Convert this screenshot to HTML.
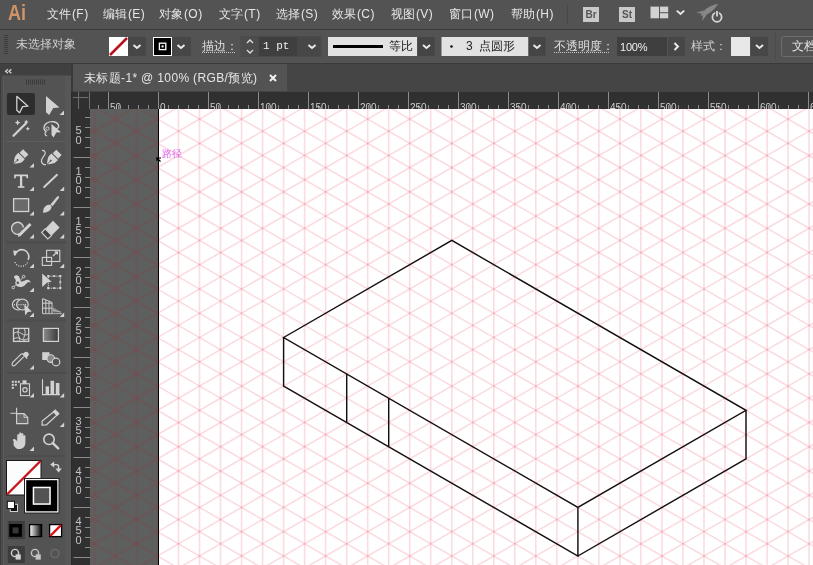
<!DOCTYPE html>
<html><head><meta charset="utf-8">
<style>
*{margin:0;padding:0;box-sizing:border-box}
html,body{width:813px;height:565px;overflow:hidden;background:#535353;font-family:"Liberation Sans",sans-serif;}
body{will-change:transform}
.a{position:absolute}
.mi{position:absolute;top:5.5px;color:#e6e6e6;font-size:12px;line-height:16px;white-space:nowrap;letter-spacing:0.45px}
.ct{position:absolute;color:#d0d0d0;font-size:12px;line-height:16px;white-space:nowrap}
.tt{letter-spacing:0.35px}
.rl{position:absolute;color:#cfcfcf;font-size:10px;line-height:10px;}
.rv{position:absolute;color:#c4c4c4;font-size:11px;line-height:11px;}
.dd{position:absolute;top:37px;height:19px;background:#474747}
.chev{position:absolute;}
</style></head><body>
<!-- menu bar -->
<div class="a" style="left:0;top:0;width:813px;height:29px;background:#535353"></div>
<div class="a" style="left:8px;top:1px;font-size:22px;line-height:24px;font-weight:bold;color:#cf9367;transform:scaleX(0.82);transform-origin:0 0">Ai</div>
<div class="mi" style="left:47px">文件(F)</div>
<div class="mi" style="left:103px">编辑(E)</div>
<div class="mi" style="left:159px">对象(O)</div>
<div class="mi" style="left:219px">文字(T)</div>
<div class="mi" style="left:276px">选择(S)</div>
<div class="mi" style="left:332px">效果(C)</div>
<div class="mi" style="left:391px">视图(V)</div>
<div class="mi" style="left:449px">窗口(W)</div>
<div class="mi" style="left:511px">帮助(H)</div>
<div class="a" style="left:567px;top:5px;width:1px;height:19px;background:#474747"></div>
<div class="a" style="left:583px;top:7px;width:16px;height:15px;background:#c9c9c9;color:#555;font-size:10px;line-height:15px;font-weight:bold;text-align:center">Br</div>
<div class="a" style="left:619px;top:7px;width:16px;height:15px;background:#c9c9c9;color:#555;font-size:10px;line-height:15px;font-weight:bold;text-align:center">St</div>
<svg class="a" style="left:640px;top:0" width="90" height="29" viewBox="640 0 90 29">
<rect x="650.5" y="6.6" width="8.5" height="11.7" fill="#d2d2d2"/><rect x="660" y="6.6" width="8.2" height="5.6" fill="#d2d2d2"/><rect x="660" y="13.2" width="8.2" height="5.1" fill="#d2d2d2"/>
<path d="M676.8 10.6L680.5 14L684.2 10.6" stroke="#e8e8e8" stroke-width="1.9" fill="none"/>
<g transform="translate(709 10) rotate(-35)" fill="#888"><path d="M-10 0C-6 -3.5 4 -3.5 11 0C4 3.5 -6 3.5 -10 0Z"/><path d="M-8 -1L-12 -5L-4 -2.5ZM-8 1L-12 5L-4 2.5Z"/></g>
<circle cx="717" cy="17.2" r="4.6" stroke="#535353" stroke-width="4" fill="none"/>
<circle cx="717" cy="17.2" r="4.6" stroke="#d6d6d6" stroke-width="1.8" fill="none"/>
<path d="M717 10.5v6.5" stroke="#535353" stroke-width="3.6"/><path d="M717 11v5.6" stroke="#d6d6d6" stroke-width="1.8"/>
</svg>
<div class="a" style="left:0;top:29px;width:813px;height:1px;background:#3a3a3a"></div>
<!-- control bar -->
<div class="a" style="left:0;top:30px;width:813px;height:33px;background:#535353"></div>
<svg class="a" style="left:0;top:30px" width="813" height="33" viewBox="0 30 813 33">
<g fill="#3c3c3c"><rect x="4" y="35" width="4" height="1"/><rect x="4" y="37" width="4" height="1"/><rect x="4" y="39" width="4" height="1"/><rect x="4" y="41" width="4" height="1"/><rect x="4" y="43" width="4" height="1"/><rect x="4" y="45" width="4" height="1"/><rect x="4" y="47" width="4" height="1"/><rect x="4" y="49" width="4" height="1"/><rect x="4" y="51" width="4" height="1"/><rect x="4" y="53" width="4" height="1"/></g>
<rect x="109" y="37" width="19" height="19" fill="#fff"/>
<path d="M110 55L127 38" stroke="#b8101c" stroke-width="2.5"/>
<rect x="128" y="37" width="18" height="19" fill="#474747"/>
<path d="M133.5 45L137 48L140.5 45" stroke="#ececec" stroke-width="1.9" fill="none"/>
<rect x="153" y="37" width="19" height="19" fill="#fff"/>
<rect x="154" y="38" width="17" height="17" fill="#000"/>
<rect x="159.4" y="43.2" width="6.4" height="6.4" fill="none" stroke="#fff" stroke-width="1.3"/>
<rect x="161.6" y="45.4" width="2" height="2" fill="#fff"/>
<rect x="172" y="37" width="19" height="19" fill="#474747"/>
<path d="M177.5 45L181 48L184.5 45" stroke="#ececec" stroke-width="1.9" fill="none"/>
<path d="M202 52.5H236" stroke="#c8c8c8" stroke-width="1" stroke-dasharray="1 1"/>
<rect x="241" y="36.5" width="80" height="20" fill="none" stroke="#4a4a4a" stroke-width="1"/>
<rect x="241.5" y="37" width="17.5" height="19" fill="#4c4c4c"/>
<path d="M247 43L250 40L253 43M247 50L250 53L253 50" stroke="#e0e0e0" stroke-width="1.3" fill="none"/>
<rect x="259" y="37" width="38" height="19" fill="#3f3f3f"/>
<rect x="297" y="37" width="7" height="19" fill="#474747"/>
<rect x="304" y="37" width="16.5" height="19" fill="#474747"/>
<path d="M308.5 45L312 48L315.5 45" stroke="#ececec" stroke-width="1.9" fill="none"/>
<rect x="328" y="37" width="89" height="19" fill="#e2e2e2"/>
<rect x="333" y="45" width="50" height="3" fill="#000"/>
<rect x="418" y="37" width="16.5" height="19" fill="#454545"/>
<path d="M423 45L426.5 48L430 45" stroke="#ececec" stroke-width="1.9" fill="none"/>
<rect x="441.5" y="37" width="87" height="19" fill="#e2e2e2"/>
<circle cx="451.5" cy="46.5" r="1.3" fill="#111"/>
<rect x="528.5" y="37" width="17" height="19" fill="#454545"/>
<path d="M533.5 45L537 48L540.5 45" stroke="#ececec" stroke-width="1.9" fill="none"/>
<path d="M554 52.5H610" stroke="#c8c8c8" stroke-width="1" stroke-dasharray="1 1"/>
<rect x="617" y="37" width="50" height="19" fill="#3f3f3f"/>
<rect x="668" y="37" width="17" height="19" fill="#474747"/>
<path d="M674.5 43L678 46.5L674.5 50" stroke="#ececec" stroke-width="1.9" fill="none"/>
<rect x="731" y="37" width="19" height="19" fill="#e8e8e8"/>
<rect x="751" y="37" width="17" height="19" fill="#474747"/>
<path d="M756 45L759.5 48L763 45" stroke="#ececec" stroke-width="1.9" fill="none"/>
<rect x="775" y="33" width="1" height="27" fill="#4a4a4a"/>
<rect x="781.5" y="36.5" width="40" height="20" rx="2" fill="#535353" stroke="#6e6e6e" stroke-width="1"/>
</svg>
<div class="ct" style="left:16px;top:36px;color:#cfcfcf">未选择对象</div>
<div class="ct" style="left:202px;top:38px;color:#e0e0e0">描边：</div>
<div class="ct" style="left:263px;top:38px;color:#f0f0f0;font-family:'Liberation Mono',monospace;font-size:11px">1 pt</div>
<div class="ct" style="left:389px;top:38px;color:#222;">等比</div>
<div class="ct" style="left:466px;top:38px;color:#222;">3</div><div class="ct" style="left:479px;top:38px;color:#222;">点圆形</div>
<div class="ct" style="left:554px;top:38px;color:#e0e0e0">不透明度：</div>
<div class="ct" style="left:620px;top:38.5px;color:#f0f0f0;font-size:11px;letter-spacing:-0.2px">100%</div>
<div class="ct" style="left:691px;top:38px;color:#cfcfcf">样式：</div>
<div class="ct" style="left:792px;top:38px;color:#e6e6e6">文档</div>
<div class="a" style="left:0;top:63px;width:813px;height:1px;background:#3a3a3a"></div>
<!-- tab bar -->
<div class="a" style="left:71px;top:64px;width:742px;height:28px;background:#454545"></div>
<div class="a" style="left:73px;top:64px;width:214px;height:27px;background:#535353"></div>
<div class="ct tt" style="left:84px;top:70px;color:#e6e6e6">未标题-1* @ 100% (RGB/预览)</div>
<svg class="a" style="left:268px;top:73px" width="10" height="10" viewBox="0 0 10 10"><path d="M2 2L8 8M8 2L2 8" stroke="#f0f0f0" stroke-width="2"/></svg>
<!-- tool panel -->
<div class="a" style="left:0;top:64px;width:71px;height:501px;background:#535353"></div>
<div class="a" style="left:71px;top:64px;width:2px;height:28px;background:#3a3a3a"></div><div class="a" style="left:71px;top:92px;width:1px;height:473px;background:#2b2b2b"></div>

<svg class="a" style="left:0;top:64px" width="71" height="501" viewBox="0 64 71 501">
<rect x="0" y="75.5" width="1" height="490" fill="#3c3c3c"/><rect x="1" y="75.5" width="2" height="490" fill="#4c4c4c"/><rect x="65" y="75.5" width="6" height="490" fill="#575757"/>
<rect x="0" y="64" width="71" height="11.5" fill="#404040"/>
<path d="M8 69.2L5.6 71.2L8 73.2M11.4 69.2L9 71.2L11.4 73.2" stroke="#cfcfcf" stroke-width="1.3" fill="none"/>
<rect x="3" y="75.5" width="1" height="490" fill="#5a5a5a"/>

<g fill="#3a3a3a"><rect x="26" y="79.5" width="1" height="5"/><rect x="28" y="79.5" width="1" height="5"/><rect x="30" y="79.5" width="1" height="5"/><rect x="32" y="79.5" width="1" height="5"/><rect x="34" y="79.5" width="1" height="5"/><rect x="36" y="79.5" width="1" height="5"/><rect x="38" y="79.5" width="1" height="5"/><rect x="40" y="79.5" width="1" height="5"/><rect x="42" y="79.5" width="1" height="5"/><rect x="44" y="79.5" width="1" height="5"/></g>
<rect x="7" y="93" width="28" height="22" rx="2" fill="#2d2d2d"/>
<!-- selection -->
<path d="M16.8 96.3L28 106.2L22.6 106.6L19.6 112.8L16.8 110.2Z" stroke="#d2d2d2" stroke-width="1.3" fill="none" stroke-linejoin="round"/>
<!-- direct selection -->
<path d="M46 96L59.5 107.6L53.3 108L49.2 115L46 112.2Z" fill="#d2d2d2"/>
<path d="M64 115L64 110.5L59.5 115Z" fill="#d2d2d2"/>
<!-- magic wand -->
<path d="M13.5 135.8L25.8 123.5" stroke="#d2d2d2" stroke-width="2.2" stroke-linecap="round"/>
<path d="M17.6 119.8l.9 2 2 .9-2 .9-.9 2-.9-2-2-.9 2-.9zM26.3 119.5l.8 1.7 1.7.8-1.7.8-.8 1.7-.8-1.7-1.7-.8 1.7-.8zM27.8 126.6l.7 1.4 1.4.7-1.4.7-.7 1.4-.7-1.4-1.4-.7 1.4-.7z" fill="#d2d2d2"/>
<!-- lasso -->
<path d="M46.5 131.5c-3.5-1-3.5-6 .5-8.5c4-2.5 10-1.5 11.5 2c.8 2-1 3.5-2.5 4" stroke="#d2d2d2" stroke-width="1.3" fill="none"/>
<path d="M46.5 131.5c-2.5 1 -1.5 4 .5 4.5" stroke="#d2d2d2" stroke-width="1.2" fill="none"/>
<circle cx="47.5" cy="128.5" r="1.6" stroke="#d2d2d2" stroke-width="1" fill="none"/>
<path d="M51.5 124L61 132.2L56.3 132.6L53.6 137.5L51.5 135Z" fill="#d2d2d2"/>
<rect x="6" y="141" width="60" height="1" fill="#5d5d5d"/>
<!-- pen -->
<g transform="translate(13.6 164) rotate(45)">
<path d="M0 0C-1.2 -2.2 -4.6 -5.2 -4.6 -8.2V-11.2H4.6V-8.2C4.6 -5.2 1.2 -2.2 0 0Z" fill="#d2d2d2"/>
<rect x="-3.8" y="-17.2" width="7.6" height="5" fill="#d2d2d2"/>
<path d="M0 0.5V-5" stroke="#535353" stroke-width="0.9"/><circle cx="0" cy="-5.6" r="1" fill="#535353"/>
</g>
<path d="M34 167.5L34 163.0L29.5 167.5Z" fill="#d2d2d2"/>
<!-- curvature pen -->
<g transform="translate(46.8 164.6) rotate(45)">
<path d="M0 0C-1.2 -2.2 -4.6 -5.2 -4.6 -8.2V-11.2H4.6V-8.2C4.6 -5.2 1.2 -2.2 0 0Z" fill="#d2d2d2"/>
<rect x="-3.8" y="-17.2" width="7.6" height="5" fill="#d2d2d2"/>
<path d="M0 0.5V-5" stroke="#535353" stroke-width="0.9"/><circle cx="0" cy="-5.6" r="1" fill="#535353"/>
</g>
<path d="M42 150.3c2.5 0 3.8 1.5 3 3.8c-.8 2-3.8 4-3.6 7c.2 2.5 2.5 3.8 4.6 3.5" stroke="#d2d2d2" stroke-width="1.2" fill="none"/>
<!-- type -->
<path d="M15 178.3V175.3H27.2V178.3" stroke="#d2d2d2" stroke-width="1.7" fill="none"/>
<path d="M21.1 175.3V187" stroke="#d2d2d2" stroke-width="2.3"/>
<path d="M17.8 187H24.4" stroke="#d2d2d2" stroke-width="1.6"/>
<path d="M34 191L34 186.5L29.5 191Z" fill="#d2d2d2"/>
<!-- line -->
<path d="M44.2 187L57 174.8" stroke="#d2d2d2" stroke-width="1.9" stroke-linecap="round"/>
<path d="M64.2 191L64.2 186.5L59.7 191Z" fill="#d2d2d2"/>
<!-- rect -->
<rect x="13.6" y="198.7" width="15" height="12.8" fill="#6a6a6a" stroke="#d2d2d2" stroke-width="1.3"/>
<path d="M34 215.5L34 211.0L29.5 215.5Z" fill="#d2d2d2"/>
<!-- paintbrush -->
<path d="M58.6 196.3c.6.3.7 1 .4 1.5L52.6 206.3L50.4 204.6L57.2 196.6c.4-.4 1-.5 1.4-.3Z" fill="#d2d2d2"/>
<path d="M50.2 204.8c-3.2-.6-5.6 1.8-6.4 3.6c-.6 1.4-.8 3-.8 4.4c1.6-.2 3.6-.6 5.2-1.4c2.2-1.2 3.8-3.4 3.2-5.2Z" fill="#d2d2d2"/>
<path d="M64.2 215.5L64.2 211.0L59.7 215.5Z" fill="#d2d2d2"/>
<!-- shaper -->
<path d="M19.5 234a6 6 0 1 1 4-6.5" stroke="#d2d2d2" stroke-width="1.4" fill="#686868"/>
<path d="M19.5 235L30.5 224" stroke="#d2d2d2" stroke-width="3"/>
<path d="M17.8 236.8L18.6 233.4L21.2 236Z" fill="#d2d2d2"/>
<path d="M34 238.5L34 234.0L29.5 238.5Z" fill="#d2d2d2"/>
<!-- eraser -->
<path d="M53 220.8L59.6 227.6L51.6 235.4L45.2 228.8Z" fill="#d2d2d2"/>
<path d="M45.2 228.8L51.6 235.4L47.8 239L41.6 232.5Z" stroke="#d2d2d2" stroke-width="1.1" fill="#454545"/>
<path d="M64.2 238.5L64.2 234.0L59.7 238.5Z" fill="#d2d2d2"/>
<rect x="6" y="241" width="60" height="2.5" fill="#4d4d4d"/>
<!-- rotate -->
<path d="M16.2 253.3A7 7 0 1 1 27 262" stroke="#d2d2d2" stroke-width="1.6" fill="none" transform="rotate(-20 21.3 258)"/>
<path d="M27.5 262.5A7 7 0 0 1 14.5 261" stroke="#d2d2d2" stroke-width="1.4" fill="none" stroke-dasharray="1 1.4"/>
<path d="M13.2 250.5L18.4 251L14 255.8Z" fill="#d2d2d2"/>
<path d="M34 268L34 263.5L29.5 268Z" fill="#d2d2d2"/>
<!-- scale -->
<rect x="46.6" y="250.3" width="13.2" height="11.2" stroke="#d2d2d2" stroke-width="1.1" fill="none"/>
<rect x="42.3" y="257.4" width="9.3" height="8" stroke="#d2d2d2" stroke-width="1.1" fill="none"/>
<path d="M53 256L57.4 251.8M54.6 251.8h2.8v2.8" stroke="#d2d2d2" stroke-width="1.2" fill="none"/>
<path d="M64.2 268L64.2 263.5L59.7 268Z" fill="#d2d2d2"/>
<!-- puppet warp -->
<path d="M14 276.5c1.5-2 4.5-1.5 5.5 1c.8 2 .2 3.5 1.8 4c2 .5 4-2 6.5-1.8c2 .2 2.8 1.8 2.6 3.5c-.6-1-1.8-1.5-2.8-.8c-1.8 1.2-2.8 4-6.5 4.5c-3 .4-5-1-5.6-3c-.4-1.6.6-2.6.2-4c-.4-1.4-2-2-1.7-3.4Z" fill="#d2d2d2"/>
<circle cx="17.8" cy="282.8" r="1.8" fill="#5a5a5a" stroke="#d2d2d2" stroke-width="1"/>
<path d="M13.4 287.2L16.5 284.3M19.2 281.5L23.2 277" stroke="#d2d2d2" stroke-width="0.9"/>
<circle cx="13.2" cy="287.5" r="1.3" stroke="#d2d2d2" stroke-width="1" fill="#535353"/>
<circle cx="23.6" cy="276.6" r="1.3" stroke="#d2d2d2" stroke-width="1" fill="#535353"/>
<path d="M34 292L34 287.5L29.5 292Z" fill="#d2d2d2"/>
<!-- free transform -->
<path d="M42.2 273.6L51.6 281.8L47.2 282.6L42.2 287Z" fill="#d2d2d2"/>
<rect x="48.3" y="276.2" width="12" height="12" stroke="#d2d2d2" stroke-width="1" fill="none" stroke-dasharray="1.2 0.8"/>
<g fill="#d2d2d2"><rect x="47.2" y="275" width="2.2" height="2.2"/><rect x="59.2" y="275" width="2.2" height="2.2"/><rect x="47.2" y="287" width="2.2" height="2.2"/><rect x="59.2" y="287" width="2.2" height="2.2"/><rect x="53.2" y="275.2" width="2" height="1.8"/><rect x="53.2" y="287.2" width="2" height="1.8"/><rect x="59.4" y="281.2" width="1.8" height="2"/></g>
<!-- shape builder -->
<ellipse cx="18.2" cy="304.6" rx="5.8" ry="5.4" stroke="#d2d2d2" stroke-width="1.2" fill="none"/>
<ellipse cx="22.4" cy="304.6" rx="5.8" ry="5.4" stroke="#d2d2d2" stroke-width="1.2" fill="#5d5d5d"/>
<path d="M14 304.6H26" stroke="#d2d2d2" stroke-width="1.2" stroke-dasharray="1 1.2"/>
<path d="M24.2 304.3L31.8 311.6L27.8 312L25.2 315.5Z" fill="#d2d2d2"/>
<path d="M34 317L34 312.5L29.5 317Z" fill="#d2d2d2"/>
<!-- perspective grid -->
<path d="M42.6 298.6L52 302.4V313.6H42.6ZM42.6 303.2H52M42.6 308.2H52M45.8 299.8V313.6M49 301.2V313.6" stroke="#d2d2d2" stroke-width="1" fill="none"/>
<path d="M52 306.5L61 312.2H52Z" fill="#8c8c8c"/>
<path d="M52 309.5L61 312.2M42.6 313.6H62" stroke="#b0b0b0" stroke-width="1"/>
<path d="M64.2 317L64.2 312.5L59.7 317Z" fill="#d2d2d2"/>
<rect x="6" y="319.5" width="60" height="2" fill="#4d4d4d"/>
<!-- mesh -->
<rect x="13.5" y="328.4" width="15.2" height="13" stroke="#d2d2d2" stroke-width="1.3" fill="none"/>
<path d="M14 333.4c3-2.5 6-1 8 .5c2 1.5 4.5 1.5 6.2 0M14 338.8c3-2 5.5-.5 7.5.5c2.5 1.2 5 .5 6.7-1M19 328.8c-1.8 3-1 6 .2 8.2c1 2 .4 3.5-.4 4.4M24.4 328.8c1.5 3 .5 6.5-.5 8.5c-.6 1.4 0 3 .6 4" stroke="#d2d2d2" stroke-width="1" fill="none"/>
<!-- gradient -->
<defs><linearGradient id="gr1" x1="0" x2="1"><stop offset="0" stop-color="#8a8a8a"/><stop offset="1" stop-color="#3a3a3a"/></linearGradient>
<linearGradient id="gr2" x1="0" x2="1"><stop offset="0" stop-color="#fff"/><stop offset="1" stop-color="#000"/></linearGradient></defs>
<rect x="43.4" y="328.4" width="15" height="13" stroke="#d2d2d2" stroke-width="1.2" fill="url(#gr1)"/>
<!-- eyedropper -->
<path d="M24.3 352.6a2.6 2.6 0 0 1 3.7 3.7l-1.6 1.6-3.7-3.7Z" fill="#d2d2d2"/>
<path d="M22 353.4l5.2 5.2" stroke="#d2d2d2" stroke-width="1.3"/>
<path d="M23.8 356.6L15.2 365.2c-1 1-2.6 1-3-.4c-.4-1 0-1.8.8-2.6L21.6 353.6" stroke="#d2d2d2" stroke-width="1.2" fill="none"/>
<path d="M34 369.5L34 365.0L29.5 369.5Z" fill="#d2d2d2"/>
<!-- blend -->
<rect x="42.2" y="352.2" width="7.3" height="7.8" fill="#d2d2d2"/>
<circle cx="50.8" cy="358.6" r="3.8" fill="#888" stroke="#d2d2d2" stroke-width="1.1"/>
<circle cx="56" cy="362" r="3.8" fill="#535353" stroke="#d2d2d2" stroke-width="1.2"/>
<rect x="6" y="372" width="60" height="2" fill="#4d4d4d"/>
<!-- symbol sprayer -->
<g fill="#d2d2d2"><rect x="11.8" y="380.8" width="2" height="2"/><rect x="14.8" y="380.8" width="2" height="2"/><rect x="17.8" y="380.8" width="2" height="2"/><rect x="11.8" y="383.8" width="2" height="2"/><rect x="14.8" y="383.8" width="2" height="2"/><rect x="11.8" y="386.8" width="2" height="2"/></g>
<rect x="20.5" y="383.8" width="9" height="11.8" stroke="#d2d2d2" stroke-width="1.1" fill="none"/>
<rect x="22.5" y="380.3" width="4" height="3.5" fill="#d2d2d2"/>
<circle cx="25" cy="389.8" r="2.2" stroke="#d2d2d2" stroke-width="1.2" fill="none"/>
<path d="M34 397.5L34 393.0L29.5 397.5Z" fill="#d2d2d2"/>
<!-- graph -->
<path d="M42.5 379.2V394.6H60" stroke="#d2d2d2" stroke-width="1.1" fill="none"/>
<rect x="45.6" y="386.4" width="3.4" height="8.2" fill="#d2d2d2"/><rect x="50.5" y="380.8" width="3.6" height="13.8" fill="#d2d2d2"/><rect x="55.8" y="383" width="3.6" height="11.6" fill="#d2d2d2"/>
<path d="M64.2 397.5L64.2 393.0L59.7 397.5Z" fill="#d2d2d2"/>
<!-- artboard -->
<path d="M10.4 413.2h6M16.6 407.8v5.6" stroke="#d2d2d2" stroke-width="1.1"/>
<path d="M16.6 413.6h7.4l3.8 3.8v6.2H16.6Z" fill="#696969" stroke="#d2d2d2" stroke-width="1.1"/>
<path d="M24 413.6v3.8h3.8" stroke="#d2d2d2" stroke-width="0.9" fill="none"/>
<!-- slice/pencil -->
<path d="M55 410.8l3.2 3.2L46.2 425L42 425.2l.2-4.2Z" stroke="#d2d2d2" stroke-width="1.2" fill="none" stroke-linejoin="round"/>
<path d="M55.2 409.2l4.4 4.4l-2.6 2.6l-4.4-4.4Z" fill="#d2d2d2"/>
<path d="M64.2 427L64.2 422.5L59.7 427Z" fill="#d2d2d2"/>
<!-- hand -->
<path d="M13.6 441.2c-1.2-.8-.8-2.4.6-2.2c1 .2 2.2 1.4 3 2.2V435.3c0-1.4 2-1.4 2 0V440V433.5c0-1.4 2.2-1.4 2.2 0V440V434.2c0-1.4 2-1.4 2 0V440.6V436.4c0-1.4 2-1.4 2 0V442.5c0 3.8-2.4 6.6-6 6.6c-3 0-4.4-1.8-5.8-4.2Z" fill="#d2d2d2"/>
<path d="M34 451L34 446.5L29.5 451Z" fill="#d2d2d2"/>
<!-- zoom -->
<circle cx="49" cy="439.3" r="5.2" stroke="#d2d2d2" stroke-width="1.6" fill="none"/>
<path d="M52.8 443.2L58.2 448.4" stroke="#d2d2d2" stroke-width="2.4" stroke-linecap="round"/>
<rect x="6" y="455" width="60" height="2" fill="#4d4d4d"/>
<!-- fill swatch -->
<rect x="6.5" y="460.5" width="34.5" height="34.5" fill="#fbfdfd" stroke="#1a1a1a" stroke-width="1"/>
<path d="M7 494.5L40.5 461" stroke="#c8141e" stroke-width="2.4"/>
<!-- stroke swatch -->
<rect x="24" y="478" width="35.5" height="35.5" fill="#222"/>
<rect x="25" y="479" width="33.5" height="33.5" fill="#fff"/>
<rect x="26.2" y="480.2" width="31.1" height="31.1" fill="#000"/>
<rect x="32.7" y="486.7" width="18.1" height="18.1" fill="#fff"/>
<rect x="34.2" y="488.2" width="15.1" height="15.1" fill="#535353"/>
<!-- swap -->
<path d="M53 464.6H56.5C58 464.6 58.6 465.4 58.6 466.8V469.5" stroke="#d2d2d2" stroke-width="1.4" fill="none"/>
<path d="M50.2 464.6L54.2 461.4V467.8Z M55.4 468.6H61.8L58.6 472.4Z" fill="#d2d2d2"/>
<!-- default -->
<rect x="10.3" y="504.3" width="7.2" height="7.2" fill="#111" stroke="#d2d2d2" stroke-width="1"/>
<rect x="7.3" y="501.3" width="7.2" height="7.2" fill="#fff" stroke="#111" stroke-width="1"/>
<!-- color modes -->
<rect x="7.8" y="521" width="17" height="18.2" fill="#3c3c3c"/>
<rect x="9.3" y="524" width="12.6" height="12.8" fill="#000"/>
<rect x="12.6" y="527.4" width="6" height="6" fill="#363636"/>
<rect x="29.6" y="524.6" width="12" height="12" fill="url(#gr2)" stroke="#000" stroke-width="1.3"/>
<rect x="49.6" y="524.6" width="12" height="12" fill="#fff" stroke="#000" stroke-width="1.3"/>
<path d="M50.2 536L61 525.2" stroke="#e0101a" stroke-width="2.4"/>
<!-- draw modes -->
<rect x="7.8" y="546" width="17" height="17" fill="#3c3c3c"/>
<circle cx="15" cy="553" r="3.6" stroke="#d2d2d2" stroke-width="1.4" fill="none"/>
<rect x="15.6" y="554.4" width="5.2" height="5.2" fill="#d2d2d2"/>
<circle cx="35" cy="553" r="3.6" stroke="#c4c4c4" stroke-width="1.4" fill="none"/>
<rect x="35.6" y="554.4" width="5.2" height="5.2" fill="#c4c4c4"/>
<circle cx="55" cy="553.5" r="4" stroke="#686868" stroke-width="1.6" fill="none"/>
</svg>

<!-- rulers -->
<div class="a" style="left:72px;top:92px;width:741px;height:17px;background:#303030"></div>
<div class="a" style="left:72px;top:92px;width:18px;height:473px;background:#303030"></div>
<svg class="a" style="left:71px;top:92px" width="742" height="473" viewBox="71 92 742 473"><path d="M98.5 105V109M108.5 92V109M118.5 105V109M128.5 105V109M138.5 105V109M148.5 105V109M158.5 92V109M168.5 105V109M178.5 105V109M188.5 105V109M198.5 105V109M208.5 92V109M218.5 105V109M228.5 105V109M238.5 105V109M248.5 105V109M258.5 92V109M268.5 105V109M278.5 105V109M288.5 105V109M298.5 105V109M308.5 92V109M318.5 105V109M328.5 105V109M338.5 105V109M348.5 105V109M358.5 92V109M368.5 105V109M378.5 105V109M388.5 105V109M398.5 105V109M408.5 92V109M418.5 105V109M428.5 105V109M438.5 105V109M448.5 105V109M458.5 92V109M468.5 105V109M478.5 105V109M488.5 105V109M498.5 105V109M508.5 92V109M518.5 105V109M528.5 105V109M538.5 105V109M548.5 105V109M558.5 92V109M568.5 105V109M578.5 105V109M588.5 105V109M598.5 105V109M608.5 92V109M618.5 105V109M628.5 105V109M638.5 105V109M648.5 105V109M658.5 92V109M668.5 105V109M678.5 105V109M688.5 105V109M698.5 105V109M708.5 92V109M718.5 105V109M728.5 105V109M738.5 105V109M748.5 105V109M758.5 92V109M768.5 105V109M778.5 105V109M788.5 105V109M798.5 105V109M808.5 92V109M85 117.5H90M85 127.5H90M85 137.5H90M85 147.5H90M73.5 157.5H90M85 167.5H90M85 177.5H90M85 187.5H90M85 197.5H90M73.5 207.5H90M85 217.5H90M85 227.5H90M85 237.5H90M85 247.5H90M73.5 257.5H90M85 267.5H90M85 277.5H90M85 287.5H90M85 297.5H90M73.5 307.5H90M85 317.5H90M85 327.5H90M85 337.5H90M85 347.5H90M73.5 357.5H90M85 367.5H90M85 377.5H90M85 387.5H90M85 397.5H90M73.5 407.5H90M85 417.5H90M85 427.5H90M85 437.5H90M85 447.5H90M73.5 457.5H90M85 467.5H90M85 477.5H90M85 487.5H90M85 497.5H90M73.5 507.5H90M85 517.5H90M85 527.5H90M85 537.5H90M85 547.5H90M73.5 557.5H90" stroke="#8c8c8c" stroke-width="1" fill="none"/><path d="M73 97.5H88.5M78.5 92V109M89.5 92V109" stroke="#6e6e6e" stroke-width="1" fill="none"/></svg>
<div class="a" style="left:90px;top:92px;width:723px;height:17px;overflow:hidden">
<div style="position:relative;left:-90px;top:-92px"><div class="rl" style="left:110px;top:103px">50</div><div class="rl" style="left:160px;top:103px">0</div><div class="rl" style="left:210px;top:103px">50</div><div class="rl" style="left:260px;top:103px">100</div><div class="rl" style="left:310px;top:103px">150</div><div class="rl" style="left:360px;top:103px">200</div><div class="rl" style="left:410px;top:103px">250</div><div class="rl" style="left:460px;top:103px">300</div><div class="rl" style="left:510px;top:103px">350</div><div class="rl" style="left:560px;top:103px">400</div><div class="rl" style="left:610px;top:103px">450</div><div class="rl" style="left:660px;top:103px">500</div><div class="rl" style="left:710px;top:103px">550</div><div class="rl" style="left:760px;top:103px">600</div><div class="rl" style="left:810px;top:103px">650</div></div></div>
<div class="a" style="left:71px;top:109px;width:19px;height:456px;overflow:hidden">
<div style="position:relative;left:-71px;top:-109px"><div class="rv" style="left:75.5px;top:125.0px">5</div><div class="rv" style="left:75.5px;top:134.5px">0</div><div class="rv" style="left:75.5px;top:165.5px">1</div><div class="rv" style="left:75.5px;top:175.0px">0</div><div class="rv" style="left:75.5px;top:184.5px">0</div><div class="rv" style="left:75.5px;top:215.5px">1</div><div class="rv" style="left:75.5px;top:225.0px">5</div><div class="rv" style="left:75.5px;top:234.5px">0</div><div class="rv" style="left:75.5px;top:265.5px">2</div><div class="rv" style="left:75.5px;top:275.0px">0</div><div class="rv" style="left:75.5px;top:284.5px">0</div><div class="rv" style="left:75.5px;top:315.5px">2</div><div class="rv" style="left:75.5px;top:325.0px">5</div><div class="rv" style="left:75.5px;top:334.5px">0</div><div class="rv" style="left:75.5px;top:365.5px">3</div><div class="rv" style="left:75.5px;top:375.0px">0</div><div class="rv" style="left:75.5px;top:384.5px">0</div><div class="rv" style="left:75.5px;top:415.5px">3</div><div class="rv" style="left:75.5px;top:425.0px">5</div><div class="rv" style="left:75.5px;top:434.5px">0</div><div class="rv" style="left:75.5px;top:465.5px">4</div><div class="rv" style="left:75.5px;top:475.0px">0</div><div class="rv" style="left:75.5px;top:484.5px">0</div><div class="rv" style="left:75.5px;top:515.5px">4</div><div class="rv" style="left:75.5px;top:525.0px">5</div><div class="rv" style="left:75.5px;top:534.5px">0</div><div class="rv" style="left:75.5px;top:565.5px">5</div><div class="rv" style="left:75.5px;top:575.0px">0</div><div class="rv" style="left:75.5px;top:584.5px">0</div></div></div>
<!-- canvas -->
<svg class="a" style="left:90px;top:109px" width="723" height="456" viewBox="90 109 723 456">
<rect x="90" y="109" width="68" height="456" fill="#5d605e"/>
<rect x="159" y="109" width="654" height="456" fill="#ffffff"/>
<defs><clipPath id="cpb"><rect x="90" y="109" width="68" height="456"/></clipPath><clipPath id="cab"><rect x="159" y="109" width="654" height="456"/></clipPath></defs>
<g clip-path="url(#cab)" stroke="rgba(235,110,130,0.24)" stroke-width="1.6" fill="none"><path d="M94.4 109V565M115.4 109V565M136.5 109V565M157.5 109V565M178.5 109V565M199.5 109V565M220.5 109V565M241.6 109V565M262.6 109V565M283.6 109V565M304.6 109V565M325.6 109V565M346.7 109V565M367.7 109V565M388.7 109V565M409.7 109V565M430.7 109V565M451.8 109V565M472.8 109V565M493.8 109V565M514.8 109V565M535.8 109V565M556.9 109V565M577.9 109V565M598.9 109V565M619.9 109V565M640.9 109V565M662.0 109V565M683.0 109V565M704.0 109V565M725.0 109V565M746.0 109V565M767.1 109V565M788.1 109V565M809.1 109V565"/><path d="M90 -356.79L813 60.64M90 -332.52L813 84.91M90 -308.24L813 109.18M90 -283.97L813 133.45M90 -259.70L813 157.72M90 -235.43L813 182.00M90 -211.16L813 206.27M90 -186.89L813 230.54M90 -162.61L813 254.81M90 -138.34L813 279.08M90 -114.07L813 303.35M90 -89.80L813 327.63M90 -65.53L813 351.90M90 -41.25L813 376.17M90 -16.98L813 400.44M90 7.29L813 424.71M90 31.56L813 448.99M90 55.83L813 473.26M90 80.10L813 497.53M90 104.38L813 521.80M90 128.65L813 546.07M90 152.92L813 570.34M90 177.19L813 594.62M90 201.46L813 618.89M90 225.74L813 643.16M90 250.01L813 667.43M90 274.28L813 691.70M90 298.55L813 715.97M90 322.82L813 740.25M90 347.09L813 764.52M90 371.37L813 788.79M90 395.64L813 813.06M90 419.91L813 837.33M90 444.18L813 861.61M90 468.45L813 885.88M90 492.73L813 910.15M90 517.00L813 934.42M90 541.27L813 958.69M90 565.54L813 982.96"/><path d="M90 85.21L813 -332.22M90 109.48L813 -307.94M90 133.75L813 -283.67M90 158.02L813 -259.40M90 182.30L813 -235.13M90 206.57L813 -210.86M90 230.84L813 -186.59M90 255.11L813 -162.31M90 279.38L813 -138.04M90 303.65L813 -113.77M90 327.93L813 -89.50M90 352.20L813 -65.23M90 376.47L813 -40.95M90 400.74L813 -16.68M90 425.01L813 7.59M90 449.29L813 31.86M90 473.56L813 56.13M90 497.83L813 80.40M90 522.10L813 104.68M90 546.37L813 128.95M90 570.64L813 153.22M90 594.92L813 177.49M90 619.19L813 201.76M90 643.46L813 226.04M90 667.73L813 250.31M90 692.00L813 274.58M90 716.28L813 298.85M90 740.55L813 323.12M90 764.82L813 347.39M90 789.09L813 371.67M90 813.36L813 395.94M90 837.63L813 420.21M90 861.91L813 444.48M90 886.18L813 468.75M90 910.45L813 493.03M90 934.72L813 517.30M90 958.99L813 541.57M90 983.27L813 565.84M90 1007.54L813 590.11"/></g>
<g clip-path="url(#cpb)" stroke="rgba(165,45,65,0.16)" stroke-width="2" fill="none"><path d="M94.4 109V565M115.4 109V565M136.5 109V565M157.5 109V565M178.5 109V565M199.5 109V565M220.5 109V565M241.6 109V565M262.6 109V565M283.6 109V565M304.6 109V565M325.6 109V565M346.7 109V565M367.7 109V565M388.7 109V565M409.7 109V565M430.7 109V565M451.8 109V565M472.8 109V565M493.8 109V565M514.8 109V565M535.8 109V565M556.9 109V565M577.9 109V565M598.9 109V565M619.9 109V565M640.9 109V565M662.0 109V565M683.0 109V565M704.0 109V565M725.0 109V565M746.0 109V565M767.1 109V565M788.1 109V565M809.1 109V565"/><path d="M90 -356.79L813 60.64M90 -332.52L813 84.91M90 -308.24L813 109.18M90 -283.97L813 133.45M90 -259.70L813 157.72M90 -235.43L813 182.00M90 -211.16L813 206.27M90 -186.89L813 230.54M90 -162.61L813 254.81M90 -138.34L813 279.08M90 -114.07L813 303.35M90 -89.80L813 327.63M90 -65.53L813 351.90M90 -41.25L813 376.17M90 -16.98L813 400.44M90 7.29L813 424.71M90 31.56L813 448.99M90 55.83L813 473.26M90 80.10L813 497.53M90 104.38L813 521.80M90 128.65L813 546.07M90 152.92L813 570.34M90 177.19L813 594.62M90 201.46L813 618.89M90 225.74L813 643.16M90 250.01L813 667.43M90 274.28L813 691.70M90 298.55L813 715.97M90 322.82L813 740.25M90 347.09L813 764.52M90 371.37L813 788.79M90 395.64L813 813.06M90 419.91L813 837.33M90 444.18L813 861.61M90 468.45L813 885.88M90 492.73L813 910.15M90 517.00L813 934.42M90 541.27L813 958.69M90 565.54L813 982.96"/><path d="M90 85.21L813 -332.22M90 109.48L813 -307.94M90 133.75L813 -283.67M90 158.02L813 -259.40M90 182.30L813 -235.13M90 206.57L813 -210.86M90 230.84L813 -186.59M90 255.11L813 -162.31M90 279.38L813 -138.04M90 303.65L813 -113.77M90 327.93L813 -89.50M90 352.20L813 -65.23M90 376.47L813 -40.95M90 400.74L813 -16.68M90 425.01L813 7.59M90 449.29L813 31.86M90 473.56L813 56.13M90 497.83L813 80.40M90 522.10L813 104.68M90 546.37L813 128.95M90 570.64L813 153.22M90 594.92L813 177.49M90 619.19L813 201.76M90 643.46L813 226.04M90 667.73L813 250.31M90 692.00L813 274.58M90 716.28L813 298.85M90 740.55L813 323.12M90 764.82L813 347.39M90 789.09L813 371.67M90 813.36L813 395.94M90 837.63L813 420.21M90 861.91L813 444.48M90 886.18L813 468.75M90 910.45L813 493.03M90 934.72L813 517.30M90 958.99L813 541.57M90 983.27L813 565.84M90 1007.54L813 590.11"/></g>
<rect x="158" y="109" width="1" height="456" fill="#000"/>
<path d="M283.6 337.5L451.8 240.4L746.0 410.3L577.9 507.4ZM283.6 337.5V386.1L577.9 556.0V507.4M746.0 410.3V458.9L577.9 556.0M346.7 373.9V422.5M388.7 398.2V446.7" stroke="#111" stroke-width="1.4" fill="none"/>
<path d="M157 158L160.5 161.5M157 158v3M157 158h3M156 158h5" stroke="#000" stroke-width="1.2" fill="none"/>
</svg>
<div class="a" style="left:162px;top:148px;font-size:10px;line-height:11px;color:#e05cf0">路径</div>
</body></html>
